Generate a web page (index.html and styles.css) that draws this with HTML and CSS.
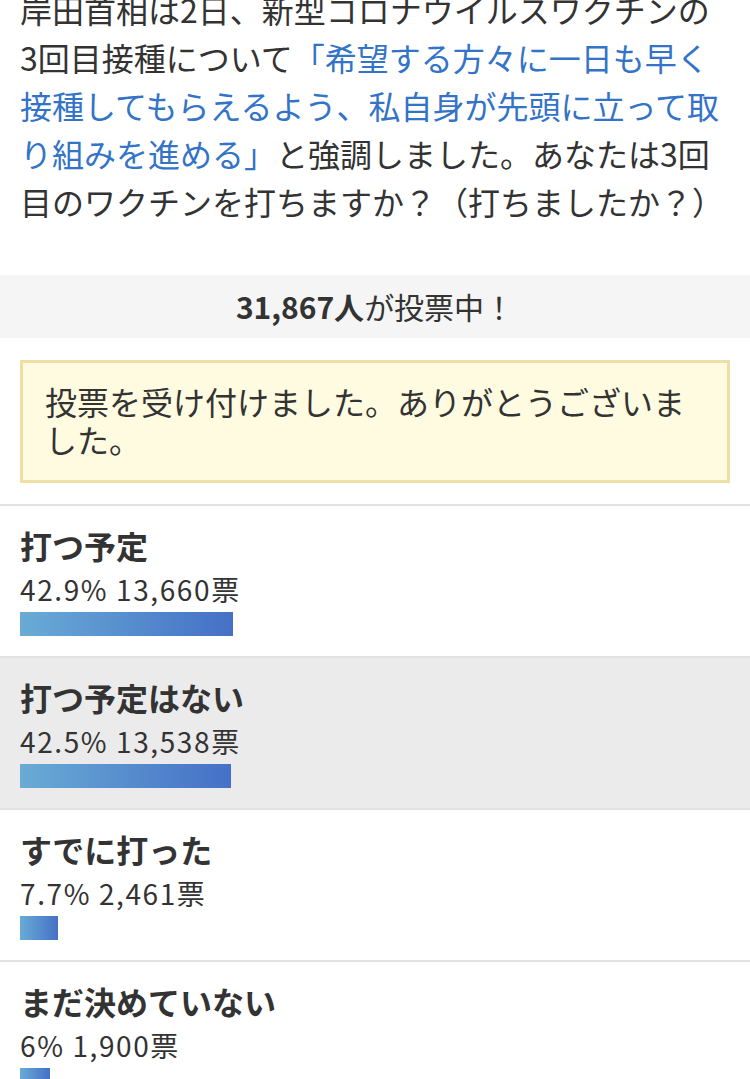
FILE: index.html
```html
<html>
<head>
  <meta charset="utf-8">
  <title>アンケート</title>
  <link rel="stylesheet" href="styles.css">
</head>
<body>
  <div class="article">
    <p class="lead">岸田首相は2日、新型コロナウイルスワクチンの3回目接種について<span class="quote">「希望する方々に一日も早く接種してもらえるよう、私自身が先頭に立って取り組みを進める」</span>と強調しました。あなたは3回目のワクチンを打ちますか？（打ちましたか？）</p>
  </div>

  <div class="count"><b>31,867人</b>が投票中！</div>

  <div class="notice">投票を受け付けました。ありがとうございました。</div>

  <ul class="results">
    <li class="item">
      <div class="label">打つ予定</div>
      <div class="stats">42.9% 13,660票</div>
      <div class="track"><div class="bar" style="width:42.9%"></div></div>
    </li>
    <li class="item voted">
      <div class="label">打つ予定はない</div>
      <div class="stats">42.5% 13,538票</div>
      <div class="track"><div class="bar" style="width:42.5%"></div></div>
    </li>
    <li class="item">
      <div class="label">すでに打った</div>
      <div class="stats">7.7% 2,461票</div>
      <div class="track"><div class="bar" style="width:7.7%"></div></div>
    </li>
    <li class="item">
      <div class="label">まだ決めていない</div>
      <div class="stats">6% 1,900票</div>
      <div class="track"><div class="bar" style="width:6%"></div></div>
    </li>
  </ul>
</body>
</html>
```

FILE: styles.css
```css
* { box-sizing: border-box; }
body {
  margin: 0;
  font-family: "Noto Sans CJK JP", sans-serif;
  color: #333;
  background: #fff;
}
.article { padding: 0 24px 0 20px; }
.lead {
  margin: -15px 0 0;
  font-size: 32px;
  line-height: 48px;
}
.quote { color: #3373c8; }

.count {
  margin-top: 50px;
  height: 63px;
  line-height: 63px;
  background: #f5f5f5;
  text-align: center;
  font-size: 30px;
}
.count b { font-weight: bold; }

.notice {
  margin: 22px 20px 21px;
  padding: 19px 22px 21px;
  border: 3px solid #eedfa7;
  background: #fefbe1;
  font-size: 32px;
  line-height: 1.2;
}

.results {
  list-style: none;
  margin: 0;
  padding: 0;
}
.item {
  border-top: 2px solid #e2e2e2;
  padding: 20px 20px;
  height: 152px;
}
.voted { background: #ebebeb; }
.label {
  font-size: 32px;
  font-weight: bold;
  line-height: 38px;
}
.stats {
  margin-top: 4px;
  font-size: 28px;
  line-height: 42px;
  letter-spacing: 1.6px;
}
.track {
  width: 70%;
  margin-top: 2px;
}
.bar {
  height: 24px;
  background: linear-gradient(to right, #69abd5, #4570c7);
}
```
